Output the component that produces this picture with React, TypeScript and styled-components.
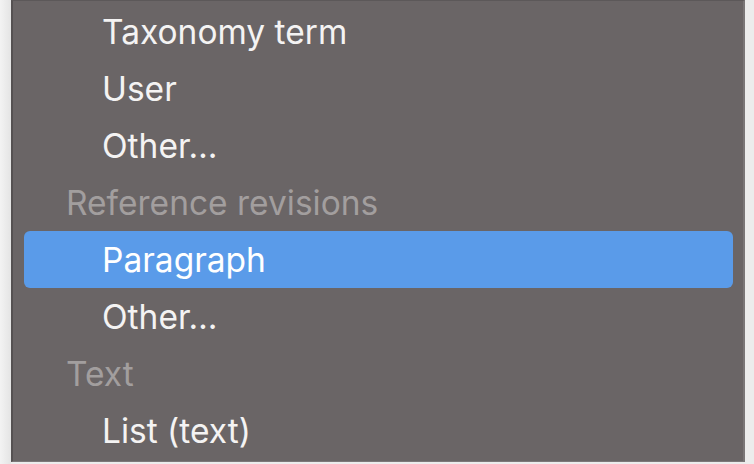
import styled, { createGlobalStyle } from 'styled-components';

const GlobalStyle = createGlobalStyle`
  html, body {
    margin: 0;
    padding: 0;
    background: #ebebeb;
  }
`;

const Page = styled.div`
  display: flex;
  width: 754px;
  height: 464px;
  padding-left: 11px;
  box-sizing: border-box;
  background: linear-gradient(90deg, #f3f3f3 0, #e4e4e4 11px, #ececec 11px);
`;

const Menu = styled.div`
  width: 734px;
  height: 462px;
  box-sizing: border-box;
  background: #6a6566;
  border-left: 2px solid #555152;
  border-right: 2px solid #7a7677;
  border-top: 1px solid #5c5859;
  border-bottom: 1px solid #7c7879;
  padding: 2px 10px 0 11px;
  display: flex;
  flex-direction: column;
  font-family: Inter, 'Liberation Sans', sans-serif;
`;

const Row = styled.div<{ $header?: boolean; $active?: boolean }>`
  height: 57px;
  flex-shrink: 0;
  display: flex;
  align-items: center;
  padding-left: ${({ $header }) => ($header ? '42px' : '78px')};
  border-radius: 6px;
  font-size: 33.5px;
  color: ${({ $header }) => ($header ? '#a29e9e' : '#f4f3f3')};
  background: ${({ $active }) => ($active ? '#5a9be9' : 'transparent')};
  ${({ $active }) => ($active ? 'color: #ffffff;' : '')}
`;

const items: { label: string; header?: boolean; active?: boolean }[] = [
  { label: 'Taxonomy term' },
  { label: 'User' },
  { label: 'Other…' },
  { label: 'Reference revisions', header: true },
  { label: 'Paragraph', active: true },
  { label: 'Other…' },
  { label: 'Text', header: true },
  { label: 'List (text)' },
];

export default function App() {
  return (
    <>
      <GlobalStyle />
      <Page>
        <Menu>
          {items.map((item, i) => (
            <Row key={i} $header={item.header} $active={item.active}>
              {item.label}
            </Row>
          ))}
        </Menu>
      </Page>
    </>
  );
}
